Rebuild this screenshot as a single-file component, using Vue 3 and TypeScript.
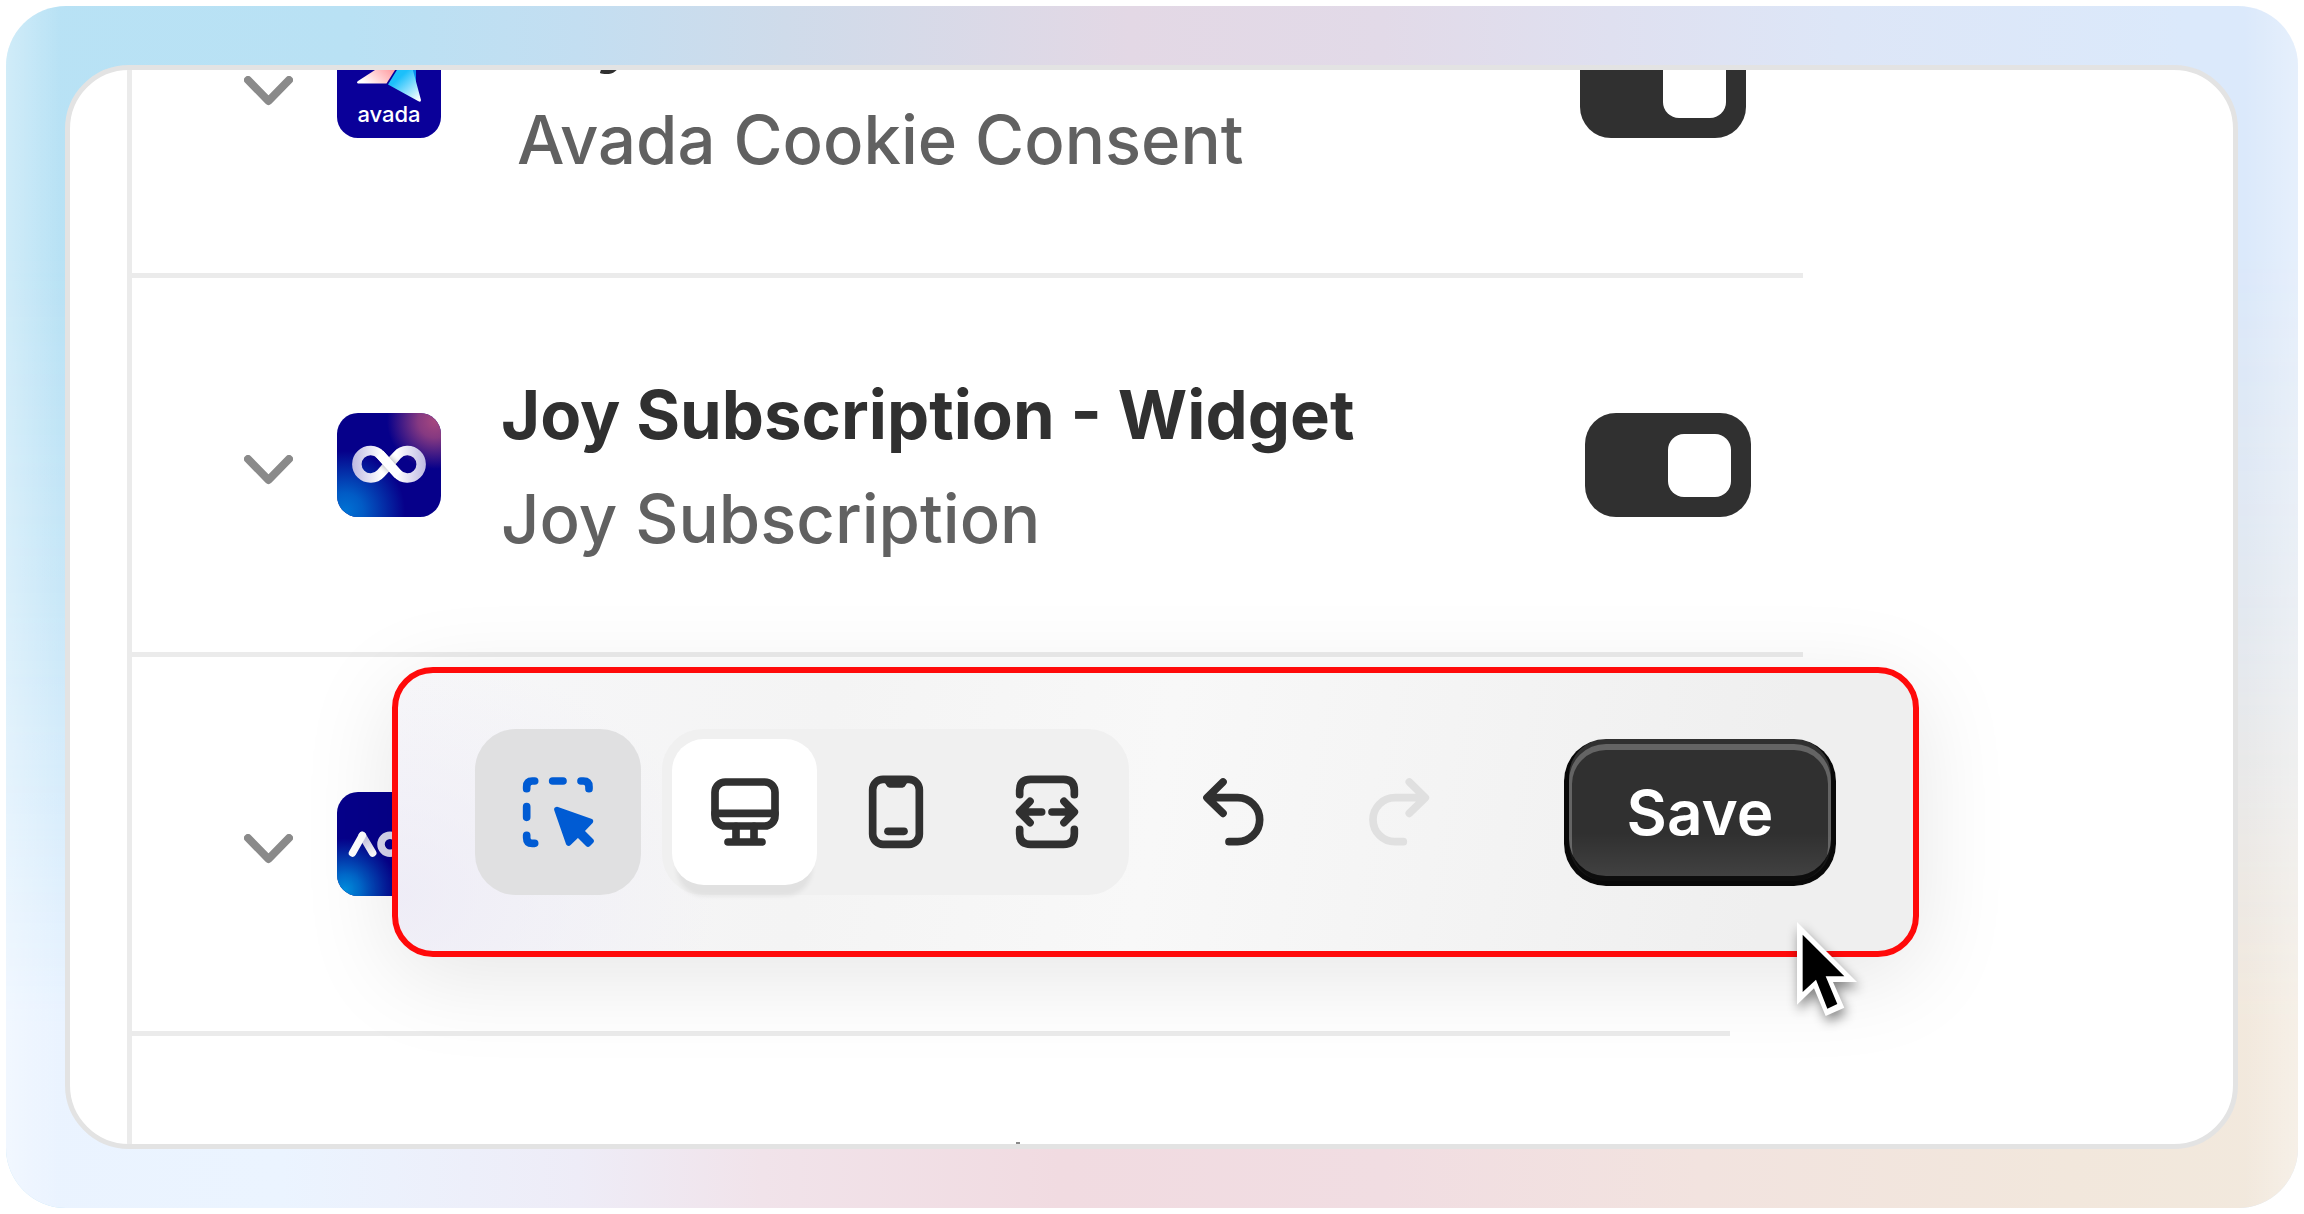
<script setup lang="ts">
import { ref } from 'vue'

type Logo = 'avada' | 'joy' | 'aov'

interface AppBlock {
  id: string
  logo: Logo
  title: string
  app: string
  enabled: boolean
  modifier?: string
}

const blocks = ref<AppBlock[]>([
  { id: 'cookie', logo: 'avada', title: 'Joy', app: 'Avada Cookie Consent', enabled: true, modifier: 'row--nested' },
  { id: 'subscription', logo: 'joy', title: 'Joy Subscription - Widget', app: 'Joy Subscription', enabled: true },
  { id: 'upsell', logo: 'aov', title: '', app: '', enabled: false, modifier: 'row--short' },
])

const device = ref<'desktop' | 'mobile' | 'full'>('desktop')
</script>

<template>
  <main class="frame">
    <section class="card">
      <ul class="list">
        <li v-for="block in blocks" :key="block.id" class="row" :class="block.modifier">
          <button type="button" class="chevron" aria-label="Expand">
            <svg viewBox="0 0 49 30" width="49" height="30">
              <path d="M4 4L24.500 25L45 4" fill="none" stroke="#8a8a8a" stroke-width="8" stroke-linecap="round" stroke-linejoin="round" />
            </svg>
          </button>

          <svg v-if="block.logo === 'avada'" class="logo" viewBox="0 0 104 104">
            <defs>
              <linearGradient id="wing" x1="0" y1="1" x2="1" y2="0.300">
                <stop offset="0.100" stop-color="#fff" />
                <stop offset="0.750" stop-color="#ff8a8f" />
              </linearGradient>
              <linearGradient id="fin" x1="0.300" y1="0" x2="0.900" y2="1">
                <stop offset="0.400" stop-color="#1cc0fb" />
                <stop offset="1" stop-color="#fff" />
              </linearGradient>
            </defs>
            <rect width="104" height="104" fill="#0a0099" />
            <path d="M72 20L79 28V48L72 44Z" fill="#0a8ff0" />
            <path d="M21 47L72 14L49.500 49.500H21Q19 48.500 21 47Z" fill="url(#wing)" />
            <path d="M51 50.500L71 18L84 66Q84 69 81 67Z" fill="url(#fin)" />
            <text x="52" y="88" text-anchor="middle" font-family="Inter, sans-serif" font-size="22" font-weight="500" fill="#fff">avada</text>
          </svg>

          <svg v-else-if="block.logo === 'joy'" class="logo" viewBox="0 0 104 104">
            <defs>
              <radialGradient id="joyPink" gradientUnits="userSpaceOnUse" cx="98" cy="8" r="48">
                <stop offset="0" stop-color="#a5477f" />
                <stop offset="0.350" stop-color="#a5477f" stop-opacity="0.800" />
                <stop offset="1" stop-color="#a5477f" stop-opacity="0" />
              </radialGradient>
              <radialGradient id="joyBlue" gradientUnits="userSpaceOnUse" cx="8" cy="98" r="60">
                <stop offset="0" stop-color="#0072d4" />
                <stop offset="0.300" stop-color="#0072d4" stop-opacity="0.800" />
                <stop offset="1" stop-color="#0072d4" stop-opacity="0" />
              </radialGradient>
              <linearGradient id="loop" gradientUnits="userSpaceOnUse" x1="15" y1="52" x2="89" y2="52">
                <stop offset="0" stop-color="#bdb9e2" />
                <stop offset="0.400" stop-color="#fff" />
                <stop offset="0.600" stop-color="#fff" />
                <stop offset="1" stop-color="#bdb9e2" />
              </linearGradient>
              <linearGradient id="under" gradientUnits="userSpaceOnUse" x1="44" y1="60" x2="60" y2="42">
                <stop offset="0" stop-color="#fff" stop-opacity="0" />
                <stop offset="0.400" stop-color="#a9a9b4" />
                <stop offset="0.600" stop-color="#a9a9b4" />
                <stop offset="1" stop-color="#fff" stop-opacity="0" />
              </linearGradient>
            </defs>
            <rect width="104" height="104" fill="#06008a" />
            <rect width="104" height="104" fill="url(#joyPink)" />
            <rect width="104" height="104" fill="url(#joyBlue)" />
            <g fill="none" stroke-width="9.500">
              <path d="M43.700 42.100L60.300 60.500A13.700 13.700 0 1 0 60.300 42.100L43.700 60.500A13.700 13.700 0 1 1 43.700 42.100Z" stroke="url(#loop)" />
              <path d="M60.300 42.100L43.700 60.500" stroke="url(#under)" />
              <path d="M42.700 41L61.300 61.600" stroke="#fff" />
            </g>
          </svg>

          <svg v-else class="logo" viewBox="0 0 104 104">
            <defs>
              <radialGradient id="aovBlue" gradientUnits="userSpaceOnUse" cx="8" cy="98" r="52">
                <stop offset="0" stop-color="#0090e0" />
                <stop offset="0.300" stop-color="#0084dc" stop-opacity="0.800" />
                <stop offset="1" stop-color="#0072d4" stop-opacity="0" />
              </radialGradient>
              <linearGradient id="aovLeg" gradientUnits="userSpaceOnUse" x1="25" y1="43" x2="36" y2="62">
                <stop offset="0" stop-color="#b9b6dc" />
                <stop offset="1" stop-color="#fff" />
              </linearGradient>
            </defs>
            <rect width="104" height="104" fill="#06008a" />
            <rect width="104" height="104" fill="url(#aovBlue)" />
            <g fill="none" stroke-width="7.500" stroke-linecap="round">
              <path d="M25.300 43.500L35.700 61" stroke="url(#aovLeg)" />
              <path d="M15.500 61L25.300 43.500" stroke="#fff" />
              <circle cx="53" cy="52.300" r="9" stroke="#d8d6ee" />
            </g>
          </svg>

          <div class="text">
            <h3 class="title">{{ block.title }}</h3>
            <p class="app">{{ block.app }}</p>
          </div>
          <input v-if="block.title" v-model="block.enabled" type="checkbox" role="switch" class="toggle" :aria-label="block.app" />
        </li>
      </ul>

      <div class="toolbar" role="toolbar" aria-label="Editor">
        <button type="button" class="tool tool--inspect" aria-label="Inspector">
          <svg class="icon" viewBox="168 179 312 312">
            <path d="M230 265V259Q230 242 247 242H254M308 242H339M393 242H400Q417 242 417 259V265M230 319V351M230 405V412Q230 429 247 429H254" />
            <path class="solid" d="M321 328L421 363L393 392L423 422L414 431L384 401L356 428Z" />
          </svg>
        </button>

        <div class="devices">
          <button type="button" class="device" :class="{ active: device === 'desktop' }" aria-label="Desktop" @click="device = 'desktop'">
            <svg class="icon" viewBox="728 179 312 312">
              <rect x="794" y="245" width="180" height="132" rx="31" />
              <path d="M794 339H974M857 378V425M911 378V425M833 425H935" />
            </svg>
          </button>
          <button type="button" class="device" :class="{ active: device === 'mobile' }" aria-label="Mobile" @click="device = 'mobile'">
            <svg class="icon" viewBox="69 179 312 312">
              <rect x="155" y="237" width="140" height="195" rx="31" />
              <path d="M201 393H249" />
              <path class="notch" d="M188 245H262Q256 249 254 255Q251 262 244 262H206Q199 262 196 255Q194 249 188 245Z" />
            </svg>
          </button>
          <button type="button" class="device" :class="{ active: device === 'full' }" aria-label="Full width" @click="device = 'full'">
            <svg class="icon" viewBox="521 179 312 312">
              <path d="M595 283V270Q595 237 628 237H726Q759 237 759 270V283M595 387V400Q595 432 628 432H726Q759 432 759 400V387" />
              <path d="M661 335H600M626 303L595 335L626 367M692 335H754M728 303L759 335L728 367" />
            </svg>
          </button>
        </div>

        <div class="history">
          <button type="button" class="tool" aria-label="Undo">
            <svg class="icon" viewBox="60 59 312 312">
              <path d="M186 125L138 172L186 219M142 172H230A66 66 0 0 1 230 304H204" />
            </svg>
          </button>
          <button type="button" class="tool tool--off" aria-label="Redo" disabled>
            <svg class="icon" viewBox="558 59 312 312">
              <path d="M745 125L793 172L745 219M789 172H702A66 66 0 0 0 702 304H727" />
            </svg>
          </button>
        </div>

        <button type="button" class="save">Save</button>

        <svg class="cursor" viewBox="800 650 240 321" width="80" height="107" aria-hidden="true">
          <path d="M830 665V913L881 864L916 947L972 922L938 845H1010Z" fill="#fff" />
          <path d="M847 703V875L887 838L921 925L951 911L916 828H972Z" fill="#000" />
        </svg>
      </div>
    </section>
  </main>
</template>

<style>
body {
  margin: 0;
  background: #fff;
}
</style>

<style scoped>
.frame {
  position: relative;
  box-sizing: border-box;
  display: flex;
  min-height: calc(100vh - 12px);
  margin: 6px;
  padding: 59px 60px 59px 59px;
  border-radius: 60px;
  overflow: hidden;
  font-family: Inter, sans-serif;
  background: linear-gradient(90deg, #b8e2f5 0%, #b9e1f4 15%, #c3def1 25%, #cfdbea 34%, #e3d8e5 49%, #e2dae8 60%, #dfe0f0 70%, #dde6f7 80%, #dbe9fb 95%);
}

.frame::before {
  content: '';
  position: absolute;
  inset: 0;
  background: linear-gradient(90deg, #eaf3ff 0%, #ebf4ff 12%, #eeecf7 25%, #f1e3ea 33%, #f1dbe1 46%, #f1dde2 60%, #f2e3df 74%, #f2e7dc 90%, #f2e9dd 100%);
  -webkit-mask-image: linear-gradient(180deg, transparent 20%, rgba(0, 0, 0, 0.35) 50%, #000 85%);
  mask-image: linear-gradient(180deg, transparent 20%, rgba(0, 0, 0, 0.35) 50%, #000 85%);
}

.frame::after {
  content: '';
  position: absolute;
  inset: 0;
  background:
    linear-gradient(90deg, rgba(255, 255, 255, 0.35), rgba(255, 255, 255, 0) 54px),
    linear-gradient(270deg, rgba(255, 255, 255, 0.3), rgba(255, 255, 255, 0) 54px);
}

.card {
  position: relative;
  z-index: 1;
  flex: 1;
  display: flex;
  flex-direction: column;
  border: 5px solid #e3e3e3;
  border-radius: 64px;
  background: #fff;
  overflow: hidden;
}

/* top edge of the next row's title, cut off by the card */
.card::after {
  content: '';
  position: absolute;
  left: 946px;
  bottom: 0;
  width: 4px;
  height: 2px;
  background: #8a8a8a;
}

.list {
  flex: 1;
  margin: -171px 430px 0 57px;
  padding: 0;
  list-style: none;
  border-left: 5px solid #ebebeb;
}

.row {
  box-sizing: border-box;
  display: flex;
  align-items: center;
  height: 379px;
  padding: 0 52px 0 112px;
  border-bottom: 5px solid #ebebeb;
}

.row--short {
  margin-right: 73px;
}

.chevron {
  display: block;
  margin: 9px 44px 0 0;
  padding: 0;
  border: 0;
  background: none;
  line-height: 0;
}

.logo {
  flex: none;
  width: 104px;
  height: 104px;
  border-radius: 21px;
}

.text {
  flex: 1;
  margin-left: 60px;
  padding-top: 4px;
}

.row--nested .text {
  margin-left: 76px;
}

.row--nested {
  padding-right: 57px;
}

.title,
.app {
  margin: 0;
  font-size: 67px;
  line-height: 104px;
  white-space: nowrap;
}

.title {
  font-weight: 700;
  color: #303030;
}

.app {
  font-weight: 450;
  color: #616161;
}

.toggle {
  appearance: none;
  flex: none;
  display: flex;
  align-items: center;
  box-sizing: border-box;
  width: 166px;
  height: 104px;
  margin: 0;
  padding: 0 20px;
  border-radius: 31px;
  background: #8a8a8a;
}

.toggle::before {
  content: '';
  width: 63px;
  height: 63px;
  border-radius: 16px;
  background: #fff;
}

.toggle:checked {
  justify-content: flex-end;
  background: #303030;
}

.toolbar {
  position: absolute;
  top: 597px;
  left: 322px;
  right: 314px;
  box-sizing: border-box;
  display: flex;
  align-items: center;
  gap: 21px;
  padding: 56px 77px;
  border: 6px solid #ff0a0a;
  border-radius: 41px;
  background:
    radial-gradient(ellipse 320px 240px at 0 80%, rgba(236, 234, 246, 0.8), rgba(240, 239, 248, 0)),
    linear-gradient(100deg, #f7f7f9 0%, #f4f4f4 28%, #f8f8f8 50%, #f4f4f4 68%, #efefef 90%);
  box-shadow: 0 20px 94px rgba(0, 0, 0, 0.1);
}

.tool,
.device {
  display: flex;
  align-items: center;
  justify-content: center;
  padding: 0;
  border: 0;
  background: none;
  color: #303030;
}

.tool {
  width: 166px;
  height: 166px;
  border-radius: 41px;
}

.tool--inspect {
  background: #e0e0e1;
  color: #005bd3;
}

.tool--off {
  color: #e0e0e0;
}

.devices {
  display: flex;
  gap: 6px;
  padding: 10px;
  border-radius: 41px;
  background: #f0f0f0;
}

.device {
  width: 145px;
  height: 146px;
  border-radius: 32px;
}

.device.active {
  background: #fff;
  box-shadow: 0 16px 5px -5px rgba(26, 26, 26, 0.07);
}

.history {
  display: flex;
}

.icon {
  width: 104px;
  height: 104px;
  fill: none;
  stroke: currentColor;
  stroke-width: 23;
  stroke-linecap: round;
  stroke-linejoin: round;
}

.solid {
  fill: currentColor;
  stroke-width: 17;
}

.notch {
  fill: currentColor;
  stroke: none;
}

.save {
  min-width: 272px;
  height: 147px;
  margin-left: auto;
  padding: 0 62px;
  border: 0;
  border-radius: 42px;
  background: linear-gradient(180deg, rgba(48, 48, 48, 0) 64%, rgba(255, 255, 255, 0.1) 100%), #303030;
  box-shadow:
    inset 0 -5px 0 5px rgba(0, 0, 0, 0.8),
    inset 0 0 0 5px #303030,
    inset 0 3px 0 8px rgba(255, 255, 255, 0.25);
  color: #fff;
  font-family: inherit;
  font-size: 62px;
  font-weight: 600;
  line-height: 83px;
}

.cursor {
  position: absolute;
  top: 244px;
  right: 46px;
  overflow: visible;
  filter: drop-shadow(2px 6px 6px rgba(0, 0, 0, 0.45));
}
</style>
